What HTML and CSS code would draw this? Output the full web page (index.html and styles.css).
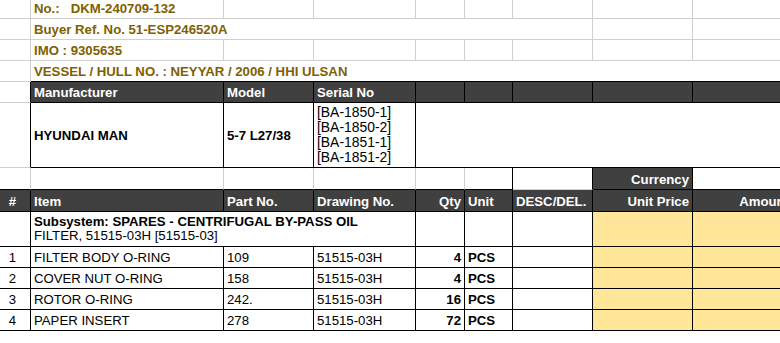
FILE: index.html
```html
<!DOCTYPE html>
<html lang="en">
<head>
<meta charset="utf-8">
<title>Quotation sheet</title>
<link rel="stylesheet" href="styles.css">
</head>
<body>
<div class="sheet">
  <!-- row 1 -->
  <div class="c"></div>
  <div class="c gold b pre">No.:   DKM-240709-132</div>
  <div class="c"></div><div class="c"></div><div class="c"></div><div class="c"></div><div class="c"></div><div class="c"></div><div class="c"></div>
  <!-- row 2 -->
  <div class="c"></div>
  <div class="c gold b span6">Buyer Ref. No. 51-ESP246520A</div>
  <div class="c"></div><div class="c"></div>
  <!-- row 3 -->
  <div class="c"></div>
  <div class="c gold b">IMO : 9305635</div>
  <div class="c"></div><div class="c"></div><div class="c"></div><div class="c"></div><div class="c"></div><div class="c"></div><div class="c"></div>
  <!-- row 4 -->
  <div class="c"></div>
  <div class="c gold b span8 kb nr">VESSEL / HULL NO. : NEYYAR / 2006 / HHI ULSAN</div>
  <!-- row 5 -->
  <div class="c kr"></div>
  <div class="c hd k">Manufacturer</div>
  <div class="c hd k">Model</div>
  <div class="c hd k">Serial No</div>
  <div class="c hd k"></div><div class="c hd k"></div><div class="c hd k"></div><div class="c hd k"></div><div class="c hd k"></div>
  <!-- row 6 -->
  <div class="c kr"></div>
  <div class="c k b">HYUNDAI MAN</div>
  <div class="c k b">5-7 L27/38</div>
  <div class="c k"><div class="lines serials">[BA-1850-1]<br>[BA-1850-2]<br>[BA-1851-1]<br>[BA-1851-2]</div></div>
  <div class="c k span5"></div>
  <!-- row 7 -->
  <div class="c kb"></div>
  <div class="c kb"></div>
  <div class="c kb"></div>
  <div class="c kb"></div>
  <div class="c kb"></div>
  <div class="c k"></div>
  <div class="c kr"></div>
  <div class="c hd k r">Currency</div>
  <div class="c kb nr"></div>
  <!-- row 8 -->
  <div class="c hd k ctr">#</div>
  <div class="c hd k">Item</div>
  <div class="c hd k">Part No.</div>
  <div class="c hd k">Drawing No.</div>
  <div class="c hd k r">Qty</div>
  <div class="c hd k">Unit</div>
  <div class="c hd k">DESC/DEL.</div>
  <div class="c hd k r">Unit Price</div>
  <div class="c hd k r">Amount</div>
  <!-- row 9 -->
  <div class="c k"></div>
  <div class="c k span3"><div class="lines subsys"><span class="b">Subsystem: SPARES - CENTRIFUGAL BY-PASS OIL</span><br>FILTER, 51515-03H [51515-03]</div></div>
  <div class="c k"></div>
  <div class="c k"></div>
  <div class="c k"></div>
  <div class="c k yl"></div>
  <div class="c k yl"></div>
  <!-- rows 10-13 -->
  <div class="c k ctr">1</div>
  <div class="c k">FILTER BODY O-RING</div>
  <div class="c k">109</div>
  <div class="c k">51515-03H</div>
  <div class="c k r b">4</div>
  <div class="c k b">PCS</div>
  <div class="c k"></div>
  <div class="c k yl"></div>
  <div class="c k yl"></div>

  <div class="c k ctr">2</div>
  <div class="c k">COVER NUT O-RING</div>
  <div class="c k">158</div>
  <div class="c k">51515-03H</div>
  <div class="c k r b">4</div>
  <div class="c k b">PCS</div>
  <div class="c k"></div>
  <div class="c k yl"></div>
  <div class="c k yl"></div>

  <div class="c k ctr">3</div>
  <div class="c k">ROTOR O-RING</div>
  <div class="c k">242.</div>
  <div class="c k">51515-03H</div>
  <div class="c k r b">16</div>
  <div class="c k b">PCS</div>
  <div class="c k"></div>
  <div class="c k yl"></div>
  <div class="c k yl"></div>

  <div class="c k ctr">4</div>
  <div class="c k">PAPER INSERT</div>
  <div class="c k">278</div>
  <div class="c k">51515-03H</div>
  <div class="c k r b">72</div>
  <div class="c k b">PCS</div>
  <div class="c k"></div>
  <div class="c k yl"></div>
  <div class="c k yl"></div>
</div>
</body>
</html>
```
FILE: styles.css
```css
html, body {
  margin: 0;
  padding: 0;
  background: #ffffff;
  overflow: hidden;
}

.sheet {
  display: grid;
  grid-template-columns: 36px 193px 90px 102px 49px 48px 80px 100px 100px;
  grid-template-rows: 21px 21px 21px 21px 21px 65px 22px 22px 35px 21px 21px 21px 21px;
  width: max-content;
  margin: -2px 0 0 -5px;
  font-family: "Liberation Sans", Arial, sans-serif;
  font-size: 13.2px;
  color: #000000;
}

.c {
  box-sizing: border-box;
  display: flex;
  align-items: center;
  padding: 0 3px;
  border-right: 1px solid #d0d0d0;
  border-bottom: 1px solid #d0d0d0;
  white-space: nowrap;
  overflow: hidden;
  line-height: 15px;
}

.pre { white-space: pre; }

.gold { color: #7f6000; }
.b { font-weight: bold; }
.r { justify-content: flex-end; }
.ctr { justify-content: center; }

.k { border-right-color: #000000; border-bottom-color: #000000; }
.kr { border-right-color: #000000; }
.kb { border-bottom-color: #000000; }
.nr { border-right-color: transparent; }

.hd {
  background: #404040;
  color: #ffffff;
  font-weight: bold;
  align-items: flex-end;
  padding-bottom: 2px;
}

.yl { background: #ffe699; }

.span3 { grid-column: span 3; }
.span5 { grid-column: span 5; }
.span6 { grid-column: span 6; }
.span8 { grid-column: span 8; }

.lines {
  white-space: nowrap;
}

.serials {
  font-size: 13.9px;
  line-height: 15px;
}

.subsys {
  line-height: 14.5px;
}
```
